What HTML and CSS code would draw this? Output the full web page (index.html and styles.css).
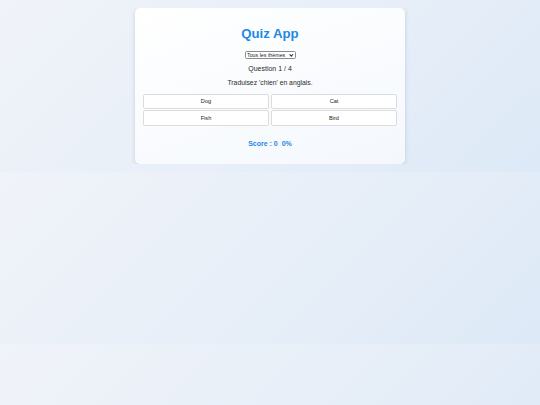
FILE: index.html
```html
<!DOCTYPE html>
<html lang="fr">
<head>
<meta charset="utf-8">
<title>Quiz App</title>
<link rel="stylesheet" href="styles.css">
</head>
<body>
<main class="card">
  <h1 class="title">Quiz App</h1>
  <div class="theme-row">
    <div class="select-wrap">
      <select class="theme-select">
        <option>Tous les thèmes</option>
      </select>
    </div>
  </div>
  <p class="counter">Question 1 / 4</p>
  <p class="question">Traduisez 'chien' en anglais.</p>
  <div class="answers">
    <button class="answer">Dog</button>
    <button class="answer">Cat</button>
    <button class="answer">Fish</button>
    <button class="answer">Bird</button>
  </div>
  <p class="score">Score : 0 <span class="pct">0%</span></p>
</main>
</body>
</html>
```

FILE: styles.css
```css
body {
  margin: 8px;
  font-family: "Liberation Sans", Arial, sans-serif;
  color: #2b2b2b;
  background: linear-gradient(135deg, #f0f3f9 0%, #e8eff8 50%, #dde9f7 100%);
}

.card {
  width: 254px;
  margin: 0 auto;
  padding: 8px;
  background: linear-gradient(160deg, #ffffff 0%, #f4f8fd 100%);
  border-radius: 5px;
  box-shadow: 0 1px 4px rgba(40, 60, 90, 0.18);
  text-align: center;
}

.title {
  margin: 10px 0 10px;
  font-size: 13.2px;
  line-height: 15px;
  font-weight: bold;
  color: #1e88e5;
}

.theme-row {
  display: flex;
  justify-content: center;
  margin-bottom: 6px;
}

.select-wrap {
  position: relative;
  display: flex;
}

.select-wrap::after {
  content: "";
  position: absolute;
  right: 3px;
  top: 2px;
  width: 1.6px;
  height: 1.6px;
  border-right: 1px solid #222;
  border-bottom: 1px solid #222;
  transform: rotate(45deg);
  pointer-events: none;
}

.theme-select {
  -webkit-appearance: none;
  appearance: none;
  width: 51px;
  height: 8px;
  padding: 0 0 0 1.5px;
  font-family: "Liberation Sans", Arial, sans-serif;
  font-size: 5.3px;
  line-height: 6px;
  border: 0.8px solid #8a8a8a;
  border-radius: 1.5px;
  background: #fff;
  color: #222;
}

.counter {
  margin: 0 0 6px;
  font-size: 7px;
  line-height: 8px;
}

.question {
  margin: 1px 0 6.5px;
  font-size: 6.8px;
  line-height: 8px;
}

.answers {
  display: grid;
  grid-template-columns: 1fr 1fr;
  gap: 1px 2px;
}

.answer {
  height: 15.5px;
  padding: 0;
  font-family: "Liberation Sans", Arial, sans-serif;
  font-size: 5.6px;
  color: #1a1a1a;
  background: #fff;
  border: 1px solid #dcdcdc;
  border-radius: 2px;
}

.score {
  margin: 14.5px 0 7.5px;
  font-size: 7px;
  line-height: 8px;
  font-weight: bold;
  color: #1e88e5;
}

.pct {
  margin-left: 2px;
}
```
